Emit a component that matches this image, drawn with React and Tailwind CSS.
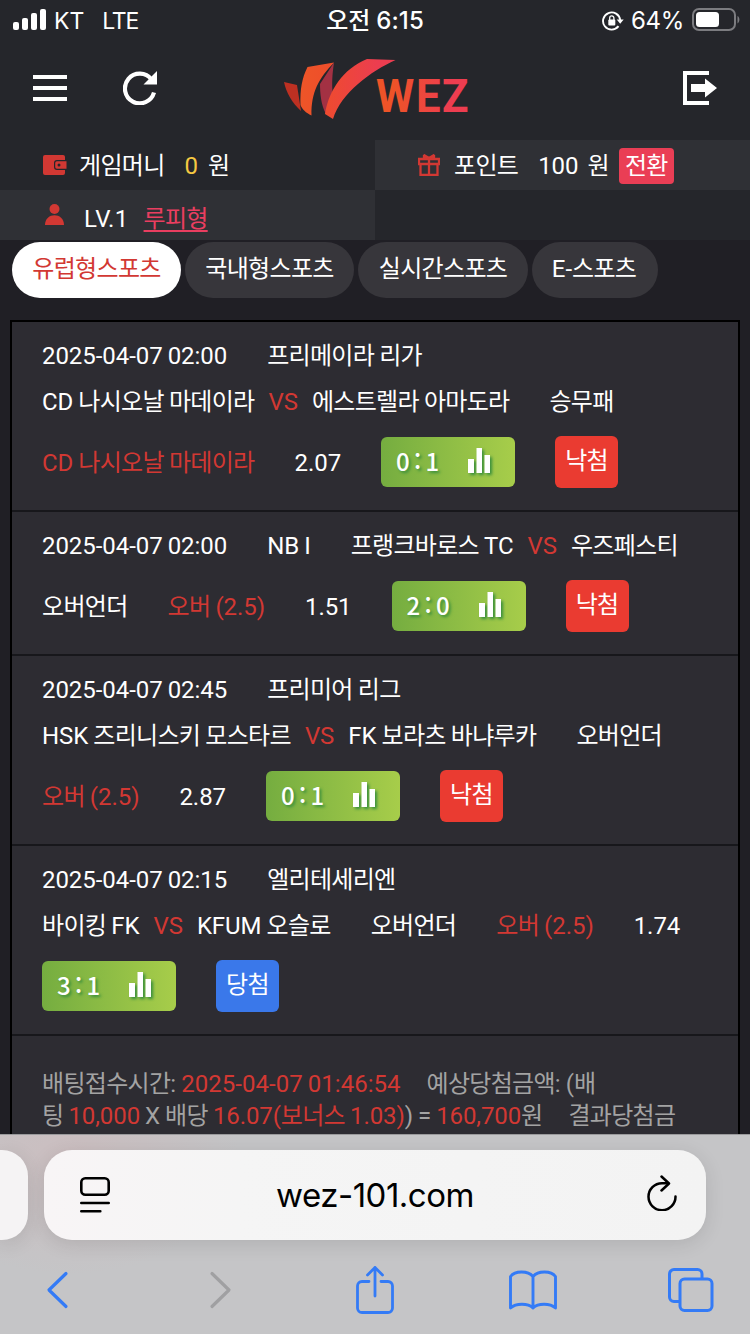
const bets = [
    [
        [{ text: "2025-04-07 02:00" }, { text: "프리메이라 리가" }],
        [{ home: "CD 나시오날 마데이라", away: "에스트렐라 아마도라" }, { text: "승무패" }],
        [{ text: "CD 나시오날 마데이라", pick: true }, { text: "2.07" }, { score: "0:1" }, { result: "낙첨" }],
    ],
    [
        [{ text: "2025-04-07 02:00" }, { text: "NB I" }, { home: "프랭크바로스 TC", away: "우즈페스티" }],
        [{ text: "오버언더" }, { text: "오버 (2.5)", pick: true }, { text: "1.51" }, { score: "2:0" }, { result: "낙첨" }],
    ],
    [
        [{ text: "2025-04-07 02:45" }, { text: "프리미어 리그" }],
        [{ home: "HSK 즈리니스키 모스타르", away: "FK 보라츠 바냐루카" }, { text: "오버언더" }],
        [{ text: "오버 (2.5)", pick: true }, { text: "2.87" }, { score: "0:1" }, { result: "낙첨" }],
    ],
    [
        [{ text: "2025-04-07 02:15" }, { text: "엘리테세리엔" }],
        [{ home: "바이킹 FK", away: "KFUM 오슬로" }, { text: "오버언더" }, { text: "오버 (2.5)", pick: true }, { text: "1.74" }],
        [{ score: "3:1" }, { result: "당첨", won: true }],
    ],
]

const tabs = ["유럽형스포츠", "국내형스포츠", "실시간스포츠", "E-스포츠"]

// Hangul is set a bit tighter than the latin text around it
function Ko({ children }) {
    return children.split(/([가-힣]+)/).map((part, i) =>
        i % 2 ? (
            <span key={i} className="tracking-[-0.7px]">
                {part}
            </span>
        ) : (
            part
        )
    )
}

function StatusBar() {
    return (
        <div className="grid h-10 shrink-0 grid-cols-3 items-center px-3 pt-0.5 font-['Inter','Noto_Sans_CJK_KR',sans-serif] text-[23px] leading-[38px]">
            <div className="flex items-center">
                <svg className="mb-0.5" width="34" height="22" viewBox="0 0 34 22" fill="white">
                    <rect x="1" y="13" width="6" height="8" rx="2" />
                    <rect x="10" y="9" width="6" height="12" rx="2" />
                    <rect x="19" y="4" width="6" height="17" rx="2" />
                    <rect x="28" y="0" width="6" height="21" rx="2" />
                </svg>
                <span className="ml-2">KT</span>
                <span className="ml-[18px] tracking-[-1.2px]">LTE</span>
            </div>
            <div className="whitespace-nowrap text-center text-[24px] font-medium tracking-[0.1px]">오전 6:15</div>
            <div className="flex items-center justify-end">
                <svg width="22" height="20" viewBox="0 0 22 20" fill="none" stroke="white" strokeWidth="1.9">
                    <path d="M16.5 15.2A8.6 8.6 0 1 1 18.2 9" />
                    <path d="M14.7 8.5h7l-3.5 4.3z" fill="white" stroke="none" />
                    <rect x="6.3" y="8.5" width="7" height="6" rx="1" fill="white" stroke="none" />
                    <path d="M7.7 9V7a2.1 2.1 0 0 1 4.2 0v2" strokeWidth="1.3" />
                </svg>
                <span className="ml-[7px] text-[24px] tracking-[-0.3px]">64%</span>
                <svg className="-mr-[2px] mb-[3px] ml-2" width="48" height="24" viewBox="0 0 48 24" fill="none">
                    <rect x="1" y="1" width="42" height="21" rx="6" stroke="#7c7c80" strokeWidth="2" />
                    <rect x="4" y="4" width="23" height="15" rx="3.5" fill="white" />
                    <path d="M45.5 8c2.5 1 2.5 6 0 7.500z" fill="#7c7c80" />
                </svg>
            </div>
        </div>
    )
}

function Logo() {
    return (
        <svg className="relative -left-[2.5px] top-px overflow-visible" width="186" height="64" viewBox="0 0 186 64">
            <defs>
                <linearGradient id="leaf" x1="0" x2="1">
                    <stop offset="0" stopColor="#ee5528" />
                    <stop offset="1" stopColor="#ee4d2b" />
                </linearGradient>
                <linearGradient id="swoosh" x1="0" x2="0.75">
                    <stop offset="0" stopColor="#ee4b2f" />
                    <stop offset="1" stopColor="#ec3d50" />
                </linearGradient>
                <linearGradient id="word" gradientUnits="userSpaceOnUse" x1="0" x2="92">
                    <stop offset="0.2" stopColor="#ee5328" />
                    <stop offset="0.85" stopColor="#ed3d50" />
                </linearGradient>
            </defs>
            <path d="M4 25l13 3 4 26C12 46 6 35 4 25z" fill="#bd3022" />
            <path d="M40 27L54 5.500C52 19 52 27 52.500 34L46 57C41 48 40 36 40 27z" fill="#a33143" />
            <path d="M27.500 10L54 5.500C39 21 31 35 31.500 58.500C26 56 22 52 20.500 48C20 32 22 21 27.500 10z" fill="url(#leaf)" />
            <path d="M87 2L115.500 3C91 14 61 36 53 62L45 57C49 33 63 12 87 2z" fill="url(#swoosh)" />
            <text
                x="0 42 69.500"
                y="0"
                transform="translate(96 54.500) scale(0.95 1)"
                fill="url(#word)"
                className="font-['Roboto',sans-serif] text-[46px] font-bold leading-none"
            >
                WEZ
            </text>
        </svg>
    )
}

function Header() {
    return (
        <header className="flex h-[100px] shrink-0 items-center justify-between pb-1 pl-[33px] pr-[33px]">
            <div className="flex w-[124px] items-center justify-between">
                <svg width="34" height="26" viewBox="0 0 34 26" fill="white">
                    <path d="M0 0h34v4H0zM0 11h34v4H0zM0 22h34v4H0z" />
                </svg>
                <svg width="34" height="34" viewBox="0 0 34 34" fill="none">
                    <path d="M28.500 8.500A14.800 14.800 0 1 0 31 21.500" stroke="white" strokeWidth="4.200" />
                    <path d="M34 0v13.500H20.500z" fill="white" />
                </svg>
            </div>
            <Logo />
            <div className="flex w-[124px] justify-end">
                <svg width="34" height="34" viewBox="0 0 34 34" fill="white">
                    <path d="M0 0h26v4H4v26h22v4H0z" />
                    <path d="M8 13h14V7.500L34 17 22 26.500V21H8z" />
                </svg>
            </div>
        </header>
    )
}

function AccountInfo() {
    return (
        <div className="grid shrink-0 grid-cols-2 grid-rows-[50px_50px] leading-[48px]">
            <div className="flex items-center pl-[43px] pt-0.5">
                <svg className="mb-0.5" width="24" height="20" viewBox="0 0 24 20" fill="#d23833">
                    <path d="M2 0h18a2 2 0 0 1 2 2v3h-8a3 3 0 0 0-3 3v4a3 3 0 0 0 3 3h8v3a2 2 0 0 1-2 2H2a2 2 0 0 1-2-2V2a2 2 0 0 1 2-2z" />
                    <path fillRule="evenodd" d="M14 6.200h9.500v7.600H14a1.800 1.800 0 0 1-1.800-1.800V8a1.800 1.800 0 0 1 1.800-1.800zM16 8.500a1.500 1.500 0 1 0 0 3 1.500 1.500 0 0 0 0-3z" />
                </svg>
                <span className="ml-3"><Ko>게임머니</Ko></span>
                <span className="ml-5 text-[#f5c842]">0</span>
                <span className="ml-2.5"><Ko>원</Ko></span>
            </div>
            <div className="flex items-center bg-[#2f3035] pl-[43px] pt-0.5">
                <svg className="mb-0.5" width="22" height="22" viewBox="0 0 22 22" fill="none" stroke="#d23833" strokeWidth="2.300">
                    <path d="M1 5h20v5H1zM2.500 10v11h17V10M11 5v16" />
                    <path d="M5.500 0.800L11 4l5.500-3.200M6 1v4M16 1v4" />
                </svg>
                <span className="ml-3.5"><Ko>포인트</Ko></span>
                <span className="ml-5">100</span>
                <span className="ml-[9px]"><Ko>원</Ko></span>
                <button className="ml-2.5 h-9 w-[55px] rounded bg-[#ea3e55] text-center leading-[34px]">
                    <Ko>전환</Ko>
                </button>
            </div>
            <div className="flex items-center bg-[#2f3035] pl-[45px]">
                <svg width="19" height="22" viewBox="0 0 19 22" fill="#d23833">
                    <circle cx="9.500" cy="5" r="5" />
                    <path d="M0 21c0-13 19-13 19 0z" />
                </svg>
                <span className="ml-5 mt-[8px] tracking-[0.3px]">LV.1</span>
                <a className="ml-[15px] mt-[8px] text-[#ea3e60] underline decoration-2 underline-offset-[3px]">
                    <Ko>루피형</Ko>
                </a>
            </div>
        </div>
    )
}

function Tabs() {
    return (
        <nav className="flex gap-1 bg-[#201f25] px-3 pb-[22px] pt-0.5">
            {tabs.map((tab, i) => (
                <button
                    key={tab}
                    className={
                        i === 0
                            ? "h-14 w-[169px] rounded-full bg-white pb-0.5 text-[#d23833]"
                            : i === 3
                              ? "h-14 w-[126px] rounded-full bg-[#37363b] pb-0.5 pr-0.5"
                              : i === 2
                                ? "h-14 w-[170px] rounded-full bg-[#37363b] pb-0.5"
                                : "h-14 w-[169px] rounded-full bg-[#37363b] pb-0.5"
                    }
                >
                    <Ko>{tab}</Ko>
                </button>
            ))}
        </nav>
    )
}

function Item({ item }) {
    if (item.score) {
        const [home, away] = item.score.split(":")
        return (
            <div className="flex h-[50px] w-[134px] items-center rounded-md bg-linear-to-r from-[#75ad40] to-[#a7cd4a] pl-[15px]">
                <span className="mb-[3px] flex w-[43px] justify-between font-['Noto_Sans_CJK_KR',sans-serif] font-medium text-shadow-[2px_2px_3px_#388e3c]">
                    <span>{home}</span>
                    <span>:</span>
                    <span>{away}</span>
                </span>
                <svg className="mb-1 ml-[29px] overflow-visible drop-shadow-[2px_2px_1.500px_#388e3c]" width="23" height="25" viewBox="0 0 23 25" fill="white">
                    <path d="M0 11h6v14H0zM8.500 0h5.500v25H8.500zM16.500 7H22v18h-5.500z" />
                </svg>
            </div>
        )
    }
    if (item.result) {
        return (
            <div
                className={
                    item.won
                        ? "h-[52px] w-[63px] rounded-md bg-[#3a78ea] text-center leading-[50px]"
                        : "h-[52px] w-[63px] rounded-md bg-[#ea3b31] text-center leading-[50px]"
                }
            >
                <Ko>{item.result}</Ko>
            </div>
        )
    }
    if (item.home) {
        return (
            <div className="flex gap-3.5">
                <span><Ko>{item.home}</Ko></span>
                <span className="text-[#d23833]">VS</span>
                <span><Ko>{item.away}</Ko></span>
            </div>
        )
    }
    return (
        <span className={item.pick ? "text-[#d23833]" : ""}>
            <Ko>{item.text}</Ko>
        </span>
    )
}

function BetRow({ lines }) {
    return (
        <div className="border-b-2 border-[#17171b] py-[11px] pl-[30px]">
            {lines.map((line, i) => (
                <div
                    key={i}
                    className={
                        i === lines.length - 1
                            ? "flex h-[74px] items-center gap-10 whitespace-nowrap leading-[34px] [&>span]:pt-0.5"
                            : "flex h-[46px] items-center gap-10 whitespace-nowrap"
                    }
                >
                    {line.map((item, j) => (
                        <Item key={j} item={item} />
                    ))}
                </div>
            ))}
        </div>
    )
}

function Summary() {
    return (
        <div className="whitespace-nowrap pl-[30px] pt-8 leading-8 text-[#a3a3a3]">
            <div className="flex gap-[26px]">
                <span className="tracking-[0.02px]">
                    <Ko>배팅접수시간:</Ko> <span className="text-[#d23833]">2025-04-07 01:46:54</span>
                </span>
                <span><Ko>예상당첨금액: (배</Ko></span>
            </div>
            <div className="flex gap-[26px]">
                <span className="tracking-[-0.1px]">
                    <Ko>팅</Ko> <span className="text-[#d23833]">10,000</span> X <Ko>배당</Ko>{" "}
                    <span className="text-[#d23833]"><Ko>16.07(보너스 1.03)</Ko></span>) ={" "}
                    <span className="text-[#d23833]">160,700</span>
                    <Ko>원</Ko>
                </span>
                <span><Ko>결과당첨금</Ko></span>
            </div>
        </div>
    )
}

function BrowserBar() {
    return (
        <footer className="flex h-[200px] shrink-0 flex-col border-t border-[#9a9a9c] bg-[#c5c5c7] bg-[radial-gradient(ellipse_170px_120px_at_70px_20px,#cfb9bb99,transparent)] pt-[15px]">
            <div className="flex gap-4">
                <div className="h-[90px] w-7 rounded-r-[26px] bg-[#f5f3f4] shadow-[0_4px_20px_#0000001c]" />
                <div className="flex h-[90px] w-[662px] items-center justify-between rounded-[28px] bg-linear-to-r from-[#f8f5f6] via-[#f5f5f5] via-30% to-[#f3f3f3] pl-9 pr-7 text-black shadow-[0_4px_20px_#0000001c]">
                    <svg width="30" height="36" viewBox="0 0 30 36" fill="none" stroke="black" strokeWidth="2.600" strokeLinecap="round">
                        <rect x="1.300" y="1.300" width="27.400" height="16.500" rx="4" />
                        <path d="M1.300 26h27.400M1.300 34.300h19" />
                    </svg>
                    <span className="mr-1.5 font-['Inter',sans-serif] text-[33px] tracking-[-0.5px]">wez-101.com</span>
                    <svg className="mb-1" width="32" height="36" viewBox="0 0 32 36" fill="none" stroke="black" strokeWidth="2.500" strokeLinecap="round" strokeLinejoin="round">
                        <path d="M22 8.200H16A13.500 13.500 0 1 0 29.500 21.500" />
                        <path d="M15.500 1.500L23 8.500l-7.500 7" />
                    </svg>
                </div>
            </div>
            <div className="flex h-[100px] items-center pl-[46px] pt-[6px] text-[#347bf6]">
                <svg width="24" height="38" viewBox="0 0 24 38" fill="none" stroke="currentColor" strokeWidth="3.200" strokeLinecap="round" strokeLinejoin="round">
                    <path d="M20 2.500L3 19l17 16.500" />
                </svg>
                <svg className="ml-[138px] text-[#a0a0a2]" width="24" height="38" viewBox="0 0 24 38" fill="none" stroke="currentColor" strokeWidth="3.200" strokeLinecap="round" strokeLinejoin="round">
                    <path d="M4 2.500L21 19 4 35.500" />
                </svg>
                <svg className="ml-[124px]" width="38" height="48" viewBox="0 0 38 48" fill="none" stroke="currentColor" strokeWidth="2.800" strokeLinecap="round" strokeLinejoin="round">
                    <path d="M13 15.500H6A4.500 4.500 0 0 0 1.500 20v22A4.500 4.500 0 0 0 6 46.500h26a4.500 4.500 0 0 0 4.500-4.500V20a4.500 4.500 0 0 0-4.500-4.500h-7" />
                    <path d="M19 30V1.500M11.500 9L19 1.500 26.500 9" />
                </svg>
                <svg className="ml-[115px]" width="48" height="40" viewBox="0 0 48 40" fill="none" stroke="currentColor" strokeWidth="2.900" strokeLinecap="round" strokeLinejoin="round">
                    <path d="M24 6.500V38M24 6.500C19 .5 6 .5 1.500 6.500V38C7 33 19 33 24 38 29 33 41 33 46.500 38V6.500C42 .5 29 .5 24 6.500z" />
                </svg>
                <svg className="ml-[111px]" width="46" height="44" viewBox="0 0 46 44" fill="none" stroke="currentColor" strokeWidth="3">
                    <rect x="12" y="11" width="32" height="31.500" rx="4.500" />
                    <path d="M34 11V6A4.500 4.500 0 0 0 29.500 1.500H6A4.500 4.500 0 0 0 1.500 6v23A4.500 4.500 0 0 0 6 33.500h6" />
                </svg>
            </div>
        </footer>
    )
}

export default function App() {
    return (
        <div
            lang="ko"
            className="flex h-[1334px] w-[750px] flex-col overflow-hidden bg-[#25262b] font-['Roboto','Noto_Sans_CJK_KR',sans-serif] text-2xl tracking-[-0.06px] text-white [word-spacing:-0.8px]"
        >
            <StatusBar />
            <Header />
            <AccountInfo />
            <Tabs />
            <main className="min-h-0 flex-1 overflow-hidden bg-[#201f25] px-2.5">
                <div className="h-[900px] border-2 border-black bg-[#2d2c32]">
                    {bets.map((lines, i) => (
                        <BetRow key={i} lines={lines} />
                    ))}
                    <Summary />
                </div>
            </main>
            <BrowserBar />
        </div>
    )
}
